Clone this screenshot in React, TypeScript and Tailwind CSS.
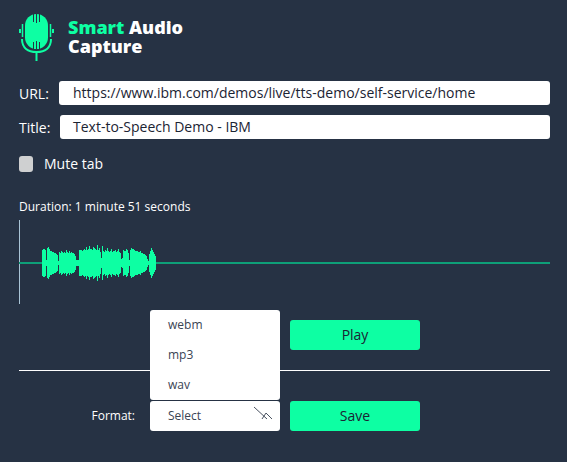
import React from "react";

const env = [
  13,14,14,13, 3,
  15,16,14,
  12,12,11,11,10,10,9,8,
  2,
  11,10,12,11,10,11,10,13,11,10,12,10,11,10,10,9,7,
  3,3,3,
  13,13,13,12,13,14,13,16,13,14,17,14,14,13,16,15,14,13,18,13,15,11,
  5,
  17,12,11,13,12,15,12,11,12,14,11,12,12,13,11,12,14,11,10,
  4,5,
  13,12,12,14,13,10,
  3,
  13,15,14,14,13,12,12,12,11,11,12,10,10,9,9,8,7,4,
  2,
  9,12,15,13,11,9,7,
];

function Waveform() {
  return (
    <svg width="531" height="84" viewBox="0 0 531 84" className="block" shapeRendering="crispEdges">
      <rect x="0" y="0" width="1" height="84" fill="#a9c4d6" />
      <rect x="0" y="42" width="531" height="2" fill="#0e9f78" />
      {env.map((h, i) => (
        <rect key={i} x={23 + i} y={43 - h} width="1" height={h * 2} fill="#0dffa3" />
      ))}
    </svg>
  );
}

function Logo() {
  return (
    <svg width="36" height="47" viewBox="0 0 36 47" className="block shrink-0" fill="none">
      <rect x="6" y="0" width="23" height="35" rx="11.5" fill="#0dffa3" />
      <path d="M14.5 0v8M17.5 0v9M20.5 0v8M14.5 28v8M17.5 27v9M20.5 28v8" stroke="#263244" strokeWidth="1" />
      <path d="M3 25c0 9 6 13 14.5 13S32 34 32 25" stroke="#0dffa3" strokeWidth="2" />
      <path d="M17.5 38v9" stroke="#0dffa3" strokeWidth="2" />
      <path d="M1 15v4M34 15v4" stroke="#0dffa3" strokeWidth="2" />
      <path d="M3.5 10v13M31.5 10v13" stroke="#0dffa3" strokeWidth="1.5" />
    </svg>
  );
}

export default function App() {
  return (
    <div
      className="w-[567px] h-[462px] overflow-hidden bg-[#263244] text-white pl-[19px] pr-[17px] pt-[13px]"
      style={{ fontFamily: '"Open Sans", sans-serif' }}
    >
      <header className="flex items-center gap-[13px] h-[48px]">
        <Logo />
        <div className="font-extrabold text-[18px] leading-[19px]">
          <div><span className="text-[#0dffa3]">Smart</span> Audio</div>
          <div>Capture</div>
        </div>
      </header>

      <div className="mt-[20px] flex items-center h-[24px]">
        <label className="w-[40px] text-[14px]">URL:</label>
        <div className="flex-1 h-full bg-white rounded-[3px] pl-[14px] text-[#1b2433] text-[14px] leading-[24px]">
          https://www.ibm.com/demos/live/tts-demo/self-service/home
        </div>
      </div>
      <div className="mt-[10px] flex items-center h-[24px]">
        <label className="w-[41px] text-[14px]">Title:</label>
        <div className="flex-1 h-full bg-white rounded-[3px] pl-[13px] text-[#1b2433] text-[14px] leading-[24px]">
          Text-to-Speech Demo - IBM
        </div>
      </div>

      <div className="mt-[17px] flex items-center h-[16px] gap-[11px]">
        <div className="w-[14px] h-[16px] rounded-[3px] bg-[#cfd0d1]" />
        <span className="text-[14px] pb-[2px]">Mute tab</span>
      </div>

      <div className="mt-[27px] text-[12px] leading-[16px]">Duration: 1 minute 51 seconds</div>

      <div className="mt-[5px]">
        <Waveform />
      </div>

      <div className="mt-[16px] flex justify-end h-[30px] pr-[130px]">
        <button className="w-[130px] h-[30px] rounded-[3px] bg-[#0dffa3] text-[#1b2433] text-[14px] leading-[28px]">Play</button>
      </div>

      <div className="mt-[20px] h-px bg-white" />

      <div className="mt-[30px] flex items-center h-[30px]">
        <span className="w-[131px] text-right pr-[15px] text-[12px]">Format:</span>
        <div className="relative w-[130px] h-[30px] bg-white rounded-[3px] text-[#3a4454] text-[12px] leading-[30px] pl-[18px]">
          Select
          <svg width="20" height="16" viewBox="0 0 20 16" fill="none" stroke="#4a5361" strokeWidth="1" className="absolute left-[103px] top-[5px]">
            <path d="M1 1L14 13M9 13L13 7L19 13" />
          </svg>
          <div className="absolute left-0 bottom-[31px] w-[130px] h-[90px] bg-white rounded-[3px] pl-[18px] flex flex-col text-[#3a4454]">
            <div className="h-[30px] leading-[30px]">webm</div>
            <div className="h-[30px] leading-[30px]">mp3</div>
            <div className="h-[30px] leading-[30px]">wav</div>
          </div>
        </div>
        <button className="ml-[10px] w-[130px] h-[30px] rounded-[3px] bg-[#0dffa3] text-[#1b2433] text-[14px] leading-[28px]">Save</button>
      </div>
    </div>
  );
}
